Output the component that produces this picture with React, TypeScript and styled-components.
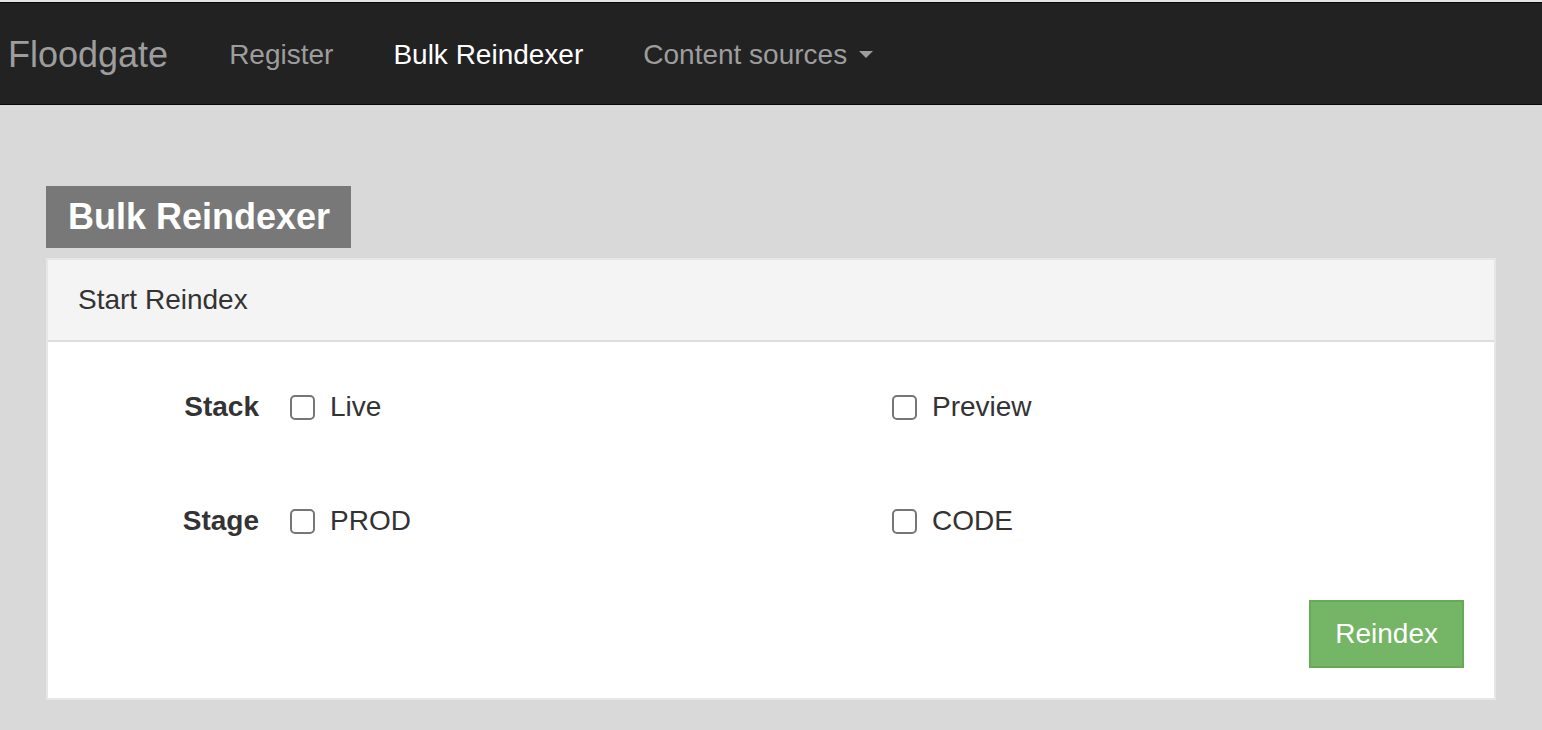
import React from "react";
import styled, { createGlobalStyle } from "styled-components";

const Global = createGlobalStyle`
  html, body { margin: 0; padding: 0; }
  body {
    background: #d9d9d9;
    font-family: "Liberation Sans", Arial, Helvetica, sans-serif;
    font-size: 28px;
    color: #333;
  }
  * { box-sizing: border-box; }
`;

const TopStrip = styled.div`
  height: 2px;
  background: #e4e4e4;
`;

const Navbar = styled.nav`
  background: #222;
  border-top: 1px solid #080808;
  border-bottom: 1px solid #080808;
  height: 103px;
  display: flex;
  align-items: center;
  padding-top: 2px;
`;

const Brand = styled.a`
  color: #9d9d9d;
  font-size: 36px;
  padding: 0 31px 0 8px;
  text-decoration: none;
  line-height: 40px;
`;

const NavLink = styled.a<{ $active?: boolean }>`
  color: ${(p) => (p.$active ? "#fff" : "#9d9d9d")};
  font-size: 28px;
  padding: 0 30px;
  line-height: 40px;
  text-decoration: none;
  display: flex;
  align-items: center;
`;

const Caret = styled.span`
  display: inline-block;
  width: 0;
  height: 0;
  margin-left: 12px;
  border-top: 7px solid #9d9d9d;
  border-left: 7px solid transparent;
  border-right: 7px solid transparent;
`;

const Main = styled.main`
  padding: 81px 46px 30px 46px;
`;

const Title = styled.h1`
  display: inline-block;
  margin: 0 0 10px 0;
  background: #787878;
  color: #fff;
  font-size: 36px;
  font-weight: bold;
  line-height: 40px;
  padding: 11px 21px 11px 22px;
`;

const Panel = styled.section`
  width: 1450px;
  background: #fff;
  border: 2px solid #e6e6e6;
`;

const PanelHeading = styled.div`
  background: #f4f4f4;
  border-bottom: 2px solid #dedede;
  padding: 20px 30px;
  line-height: 40px;
  font-size: 28px;
  color: #333;
`;

const PanelBody = styled.div`
  padding: 30px;
  display: flex;
  flex-direction: column;
  gap: 44px;
`;

const FormRow = styled.div`
  display: grid;
  grid-template-columns: 211px 602px 1fr;
  height: 70px;
  align-items: center;
  margin: 0 -30px 0 -30px;
  padding-left: 30px;
`;

const RowLabel = styled.label`
  font-weight: bold;
  text-align: right;
  padding-right: 30px;
  line-height: 40px;
`;

const Option = styled.label`
  display: flex;
  align-items: center;
  gap: 15px;
  padding-left: 1px;
  line-height: 40px;
  cursor: pointer;
`;

const Box = styled.input`
  appearance: none;
  -webkit-appearance: none;
  margin: 0;
  width: 25px;
  height: 25px;
  border: 2px solid #767676;
  border-radius: 5px;
  background: #fff;
`;

const Actions = styled.div`
  display: flex;
  justify-content: flex-end;
`;

const Button = styled.button`
  background: #74b566;
  border: 2px solid #66a959;
  color: #fff;
  font-family: inherit;
  font-size: 28px;
  line-height: 40px;
  padding: 12px 24px;
  border-radius: 0;
  cursor: pointer;
`;

const rows = [
  { label: "Stack", options: ["Live", "Preview"] },
  { label: "Stage", options: ["PROD", "CODE"] },
];

export default function App() {
  return (
    <>
      <Global />
      <TopStrip />
      <Navbar>
        <Brand href="#">Floodgate</Brand>
        <NavLink href="#">Register</NavLink>
        <NavLink href="#" $active>
          Bulk Reindexer
        </NavLink>
        <NavLink href="#">
          Content sources
          <Caret />
        </NavLink>
      </Navbar>
      <Main>
        <Title>Bulk Reindexer</Title>
        <Panel>
          <PanelHeading>Start Reindex</PanelHeading>
          <PanelBody>
            {rows.map((r) => (
              <FormRow key={r.label}>
                <RowLabel>{r.label}</RowLabel>
                {r.options.map((o) => (
                  <Option key={o}>
                    <Box type="checkbox" />
                    {o}
                  </Option>
                ))}
              </FormRow>
            ))}
            <Actions>
              <Button>Reindex</Button>
            </Actions>
          </PanelBody>
        </Panel>
      </Main>
    </>
  );
}
